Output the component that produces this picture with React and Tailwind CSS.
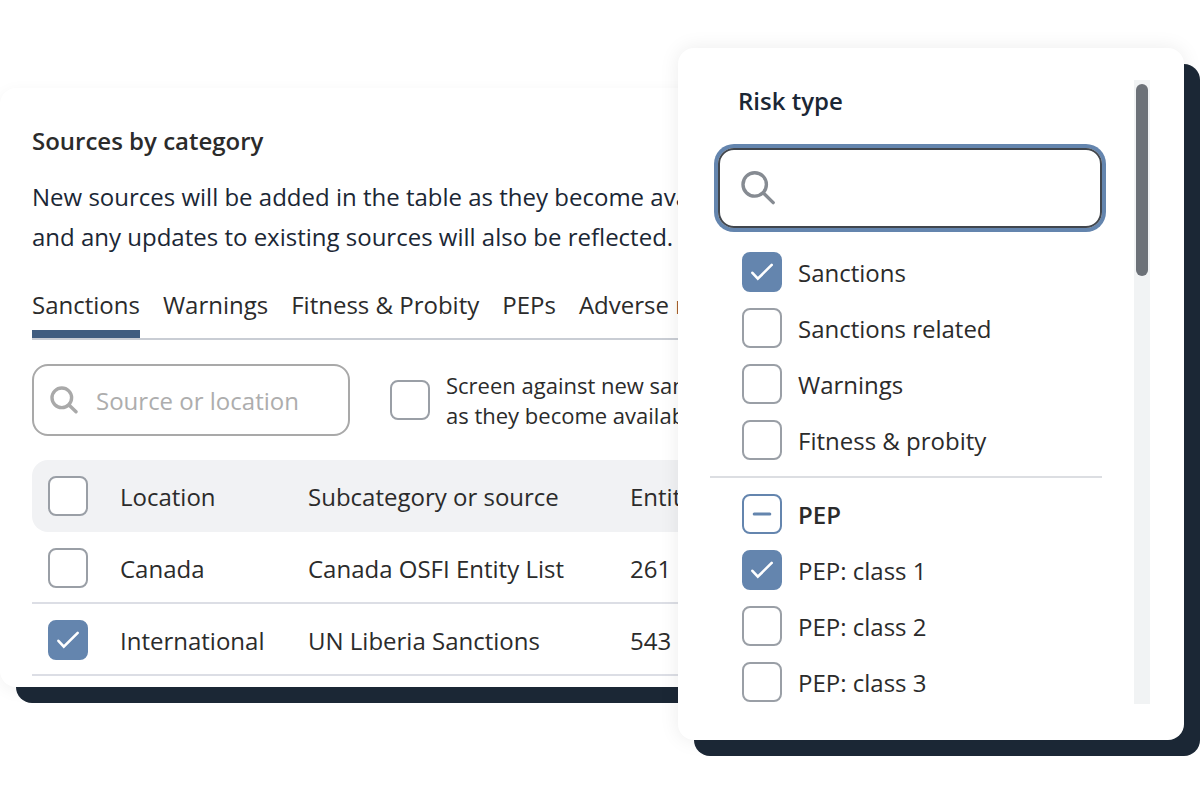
import React, { useEffect, useRef } from "react";

const TABS = ["Sanctions", "Warnings", "Fitness & Probity", "PEPs", "Adverse media"];

const SOURCES = [
  { location: "Canada", source: "Canada OSFI Entity List", entities: 261, checked: false },
  { location: "International", source: "UN Liberia Sanctions", entities: 543, checked: true },
];

const RISK_TYPES = [
  { name: "Sanctions", checked: true },
  { name: "Sanctions related" },
  { name: "Warnings" },
  { name: "Fitness & probity" },
];

const PEP_TYPES = [
  { name: "PEP", partial: true },
  { name: "PEP: class 1", checked: true },
  { name: "PEP: class 2" },
  { name: "PEP: class 3" },
];

const Checkbox = ({ checked = false, partial = false, ...props }) => {
  const ref = useRef(null);

  useEffect(() => {
    ref.current.indeterminate = partial;
  }, [partial]);

  return (
    <span className="grid size-10 shrink-0">
      <input
        ref={ref}
        type="checkbox"
        defaultChecked={checked}
        className="peer col-start-1 row-start-1 size-10 appearance-none rounded-lg border-2 border-[#9a9fa6] bg-white checked:border-[#6485ae] checked:bg-[#6485ae] indeterminate:border-[#6485ae]"
        {...props}
      />
      <svg
        className="pointer-events-none col-start-1 row-start-1 hidden size-10 peer-checked:block"
        viewBox="0 0 40 40"
        fill="none"
        stroke="#fff"
        strokeWidth="2.6"
        strokeLinecap="round"
      >
        <path d="M10.4 20.8 15.8 26.7 29.7 12.9" />
      </svg>
      <svg
        className="pointer-events-none col-start-1 row-start-1 hidden size-10 peer-indeterminate:block"
        viewBox="0 0 40 40"
        fill="none"
        stroke="#6485ae"
        strokeWidth="3"
        strokeLinecap="round"
      >
        <path d="M12.2 20h15.6" />
      </svg>
    </span>
  );
};

const Option = ({ name, checked, partial }) => (
  <li>
    <label className="flex items-start gap-4">
      <Checkbox checked={checked} partial={partial} />
      <span className={partial ? "font-semibold" : ""}>{name}</span>
    </label>
  </li>
);

const SourcesCard = () => {
  return (
    <section className="mt-10 min-w-0 flex-1 rounded-2xl bg-white px-8 pt-8 pb-[11px] whitespace-nowrap shadow-[16px_16px_0_#1b2735,0_4px_16px_rgba(0,0,0,0.05)]">
      <h2 className="font-semibold">Sources by category</h2>
      <p className="mt-[15px] leading-10 text-[#1b2735]">
        New sources will be added in the table as they become available
        <br />
        and any updates to existing sources will also be reflected.
      </p>

      {/* tabs */}
      <nav className="mt-7 flex gap-[23px] border-b-2 border-[#c9cdd4] leading-10">
        {TABS.map((tab, i) => (
          <button
            key={tab}
            type="button"
            className={
              i === 0
                ? "border-b-8 border-[#405d80] pb-[5px]"
                : "border-b-8 border-transparent pb-[5px]"
            }
          >
            {tab}
          </button>
        ))}
      </nav>

      {/* filters */}
      <div className="mt-6 flex items-center gap-10">
        <label className="flex h-[72px] w-[318px] shrink-0 items-center gap-[18px] rounded-2xl border-2 border-[#a9a9a9] px-4">
          <svg
            className="size-7 shrink-0"
            viewBox="0 0 28 28"
            fill="none"
            stroke="#a9a9a9"
            strokeWidth="3.4"
            strokeLinecap="round"
          >
            <circle cx="11.8" cy="11.8" r="9.8" />
            <path d="m19 19 7 6.8" />
          </svg>
          <input
            type="text"
            aria-label="Source or location"
            placeholder="Source or location"
            className="w-full min-w-0 pt-0.5 placeholder:text-[#adadad] focus:outline-none"
          />
        </label>
        <label className="flex items-center gap-4 text-[22px] leading-[30px]">
          <Checkbox />
          <span>
            Screen against new sanctions
            <br />
            as they become available
          </span>
        </label>
      </div>

      {/* table */}
      <table className="mt-6 w-full table-fixed border-separate border-spacing-0 text-left">
        <colgroup>
          <col className="w-[88px]" />
          <col className="w-[188px]" />
          <col className="w-[322px]" />
          <col />
        </colgroup>
        <thead className="bg-[#f1f2f4]">
          <tr className="align-top">
            <th className="rounded-l-2xl pt-4 pb-3.5 pl-4">
              <Checkbox aria-label="Select all sources" />
            </th>
            <th className="pt-4 pb-3.5 font-normal">Location</th>
            <th className="pt-4 pb-3.5 font-normal">Subcategory or source</th>
            <th className="rounded-r-2xl pt-4 pb-3.5 font-normal">Entities</th>
          </tr>
        </thead>
        <tbody>
          {SOURCES.map((row) => (
            <tr key={row.source} className="align-top">
              <td className="border-b-2 border-[#dcdee5] pt-4 pb-3 pl-4">
                <Checkbox checked={row.checked} aria-label={row.location} />
              </td>
              <td className="border-b-2 border-[#dcdee5] pt-4 pb-3">{row.location}</td>
              <td className="border-b-2 border-[#dcdee5] pt-4 pb-3">{row.source}</td>
              <td className="border-b-2 border-[#dcdee5] pt-4 pb-3">{row.entities}</td>
            </tr>
          ))}
        </tbody>
      </table>
    </section>
  );
};

const RiskPanel = () => {
  return (
    <aside className="relative z-10 mr-4 -ml-[200px] flex w-[506px] shrink-0 gap-8 rounded-2xl bg-white pt-8 pr-[34px] pb-9 pl-8 shadow-[16px_16px_0_#1b2735,0_0_20px_rgba(0,0,0,0.08)]">
      <div className="min-w-0 flex-1">
        <h2 className="pl-7 font-semibold text-[#1b2735]">Risk type</h2>
        <label className="mt-[26px] ml-2 flex h-20 items-center gap-4 rounded-2xl border-2 border-[#41464d] px-5 ring-4 ring-[#6485ae]">
          <svg
            className="size-9 shrink-0"
            viewBox="0 0 36 36"
            fill="none"
            stroke="#868b92"
            strokeWidth="3.4"
            strokeLinecap="round"
          >
            <circle cx="14.7" cy="14.4" r="11.7" />
            <path d="m23.4 23 9.8 9.6" />
          </svg>
          <input
            type="text"
            aria-label="Search risk types"
            className="w-full min-w-0 focus:outline-none"
          />
        </label>
        <ul className="flex flex-col gap-3.5 border-b-2 border-[#dcdee2] pt-6 pb-3.5 pl-8">
          {RISK_TYPES.map((type) => (
            <Option key={type.name} {...type} />
          ))}
        </ul>
        <ul className="flex flex-col gap-3.5 pt-4 pl-8">
          {PEP_TYPES.map((type) => (
            <Option key={type.name} {...type} />
          ))}
        </ul>
      </div>

      {/* scrollbar */}
      <div className="w-4 bg-[#f1f3f4] px-0.5 py-1">
        <div className="h-48 rounded-full bg-[#6c7178]" />
      </div>
    </aside>
  );
};

const App = () => {
  return (
    <main className="flex min-h-screen items-start overflow-hidden bg-white pt-12 font-['Open_Sans',sans-serif] text-2xl leading-[42px] text-[#2b2b2b]">
      <SourcesCard />
      <RiskPanel />
    </main>
  );
};

export default App;
